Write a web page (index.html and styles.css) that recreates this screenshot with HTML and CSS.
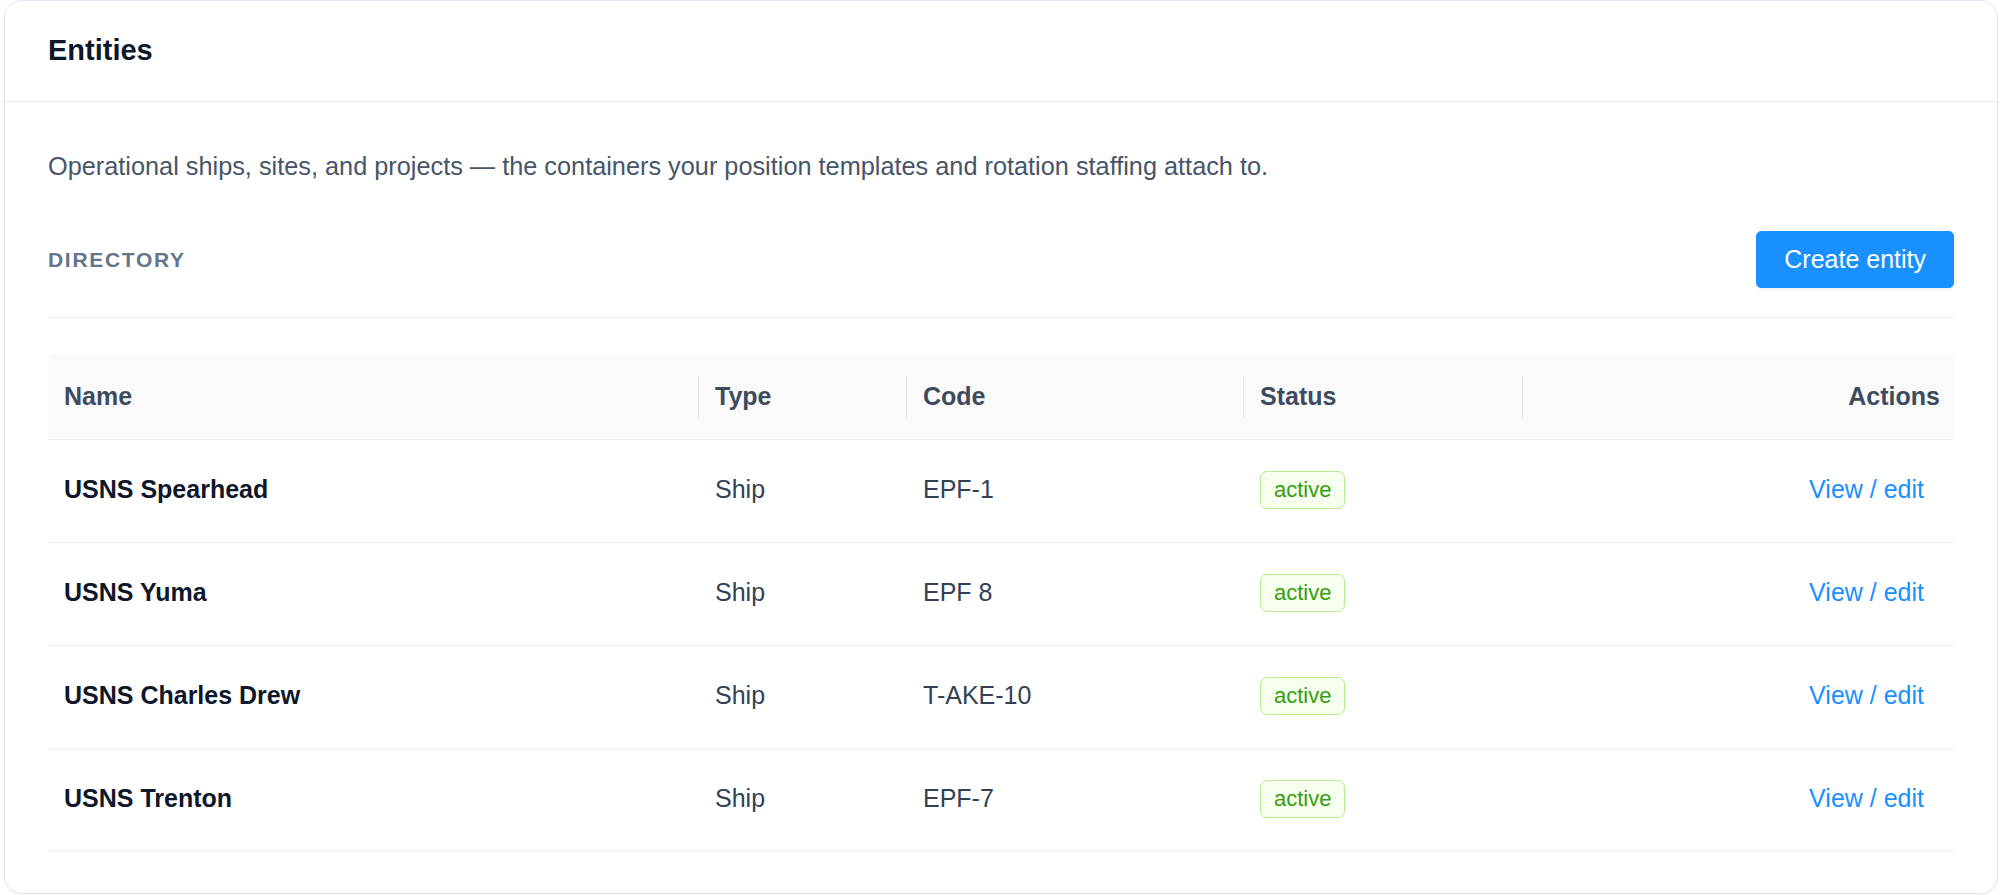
FILE: index.html
```html
<!DOCTYPE html>
<html lang="en">
<head>
    <meta charset="UTF-8">
    <meta name="viewport" content="width=device-width, initial-scale=1.0">
    <title>Entities</title>
    <link rel="stylesheet" href="styles.css">
</head>
<body>
    <div class="page">
        <div class="card">
            <div class="card-head">
                <h1>Entities</h1>
            </div>

            <div class="card-body">
                <p class="intro">Operational ships, sites, and projects — the containers your position templates and rotation staffing attach to.</p>

                <!-- Toolbar -->
                <div class="toolbar">
                    <span class="section-label">Directory</span>
                    <button type="button" class="btn-primary">Create entity</button>
                </div>
                <div class="divider"></div>

                <!-- Entity table -->
                <table class="entity-table">
                    <colgroup>
                        <col class="col-name">
                        <col class="col-type">
                        <col class="col-code">
                        <col class="col-status">
                        <col class="col-actions">
                    </colgroup>
                    <thead>
                        <tr>
                            <th class="sep">Name</th>
                            <th class="sep">Type</th>
                            <th class="sep">Code</th>
                            <th class="sep">Status</th>
                            <th class="align-right">Actions</th>
                        </tr>
                    </thead>
                    <tbody>
                        <tr>
                            <td class="name">USNS Spearhead</td>
                            <td>Ship</td>
                            <td>EPF-1</td>
                            <td><span class="tag tag-green">active</span></td>
                            <td class="align-right"><a href="#" class="link">View / edit</a></td>
                        </tr>
                        <tr>
                            <td class="name">USNS Yuma</td>
                            <td>Ship</td>
                            <td>EPF 8</td>
                            <td><span class="tag tag-green">active</span></td>
                            <td class="align-right"><a href="#" class="link">View / edit</a></td>
                        </tr>
                        <tr>
                            <td class="name">USNS Charles Drew</td>
                            <td>Ship</td>
                            <td>T-AKE-10</td>
                            <td><span class="tag tag-green">active</span></td>
                            <td class="align-right"><a href="#" class="link">View / edit</a></td>
                        </tr>
                        <tr>
                            <td class="name">USNS Trenton</td>
                            <td>Ship</td>
                            <td>EPF-7</td>
                            <td><span class="tag tag-green">active</span></td>
                            <td class="align-right"><a href="#" class="link">View / edit</a></td>
                        </tr>
                    </tbody>
                </table>
            </div>
        </div>
    </div>
</body>
</html>
```

FILE: styles.css
```css
body { margin: 0; background: #fff; font-family: "Liberation Sans", Arial, sans-serif; color: #334155; }
.page { padding: 0 2px 2px 4px; }

.card { border: 1px solid #e3e8f0; border-radius: 18px; background: #fff; box-shadow: 0 1px 3px rgba(15, 23, 42, 0.06); }
.card-head { height: 100px; display: flex; align-items: center; padding: 0 43px; border-bottom: 1px solid #e5e9f2; }
.card-head h1 { margin: 0 0 2px; font-size: 29px; font-weight: 700; color: #0f172a; }
.card-body { padding: 45px 43px 41px; }

.intro { margin: 0; font-size: 25.3px; line-height: 39px; color: #475569; }

.toolbar { display: flex; align-items: center; justify-content: space-between; margin-top: 45px; }
.section-label { font-size: 21px; font-weight: 700; letter-spacing: 1.7px; text-transform: uppercase; color: #64748b; }
.btn-primary { height: 57px; padding: 0 27px; font-family: inherit; font-size: 25px; color: #fff; background-color: #1890ff; border: 1px solid #1890ff; border-radius: 5px; box-shadow: 0 3px 0 rgba(0, 0, 0, 0.03); cursor: pointer; }
.btn-primary:hover { background-color: #40a9ff; }
.divider { height: 1px; background: #f0f0f0; margin: 29px 0 36px; }

.entity-table { width: 100%; border-collapse: collapse; table-layout: fixed; font-size: 25px; }
.col-name { width: 651px; }
.col-type { width: 208px; }
.col-code { width: 337px; }
.col-status { width: 279px; }
.entity-table th { height: 85px; padding: 0 14px 0 16px; text-align: left; font-weight: 700; color: #3e4b5e; background: #fafafa; border-bottom: 1px solid #f0f0f0; }
.entity-table th:first-child { border-top-left-radius: 6px; }
.entity-table th:last-child { border-top-right-radius: 6px; }
.entity-table th.sep { background: linear-gradient(#e8e8e8, #e8e8e8) right center / 1px 42px no-repeat, #fafafa; }
.entity-table td { height: 99px; padding: 0 16px 3px; color: #334155; border-bottom: 1px solid #f0f0f0; }
.entity-table td.name { font-weight: 700; color: #0f172a; }
.entity-table .align-right { text-align: right; }

.tag { display: inline-block; padding: 0 13px; font-size: 22px; line-height: 36px; border: 1px solid; border-radius: 7px; }
.tag-green { color: #389e0d; background: #f6ffed; border-color: #b7eb8f; }
.link { padding: 0 14px; color: #1890ff; text-decoration: none; }
```
